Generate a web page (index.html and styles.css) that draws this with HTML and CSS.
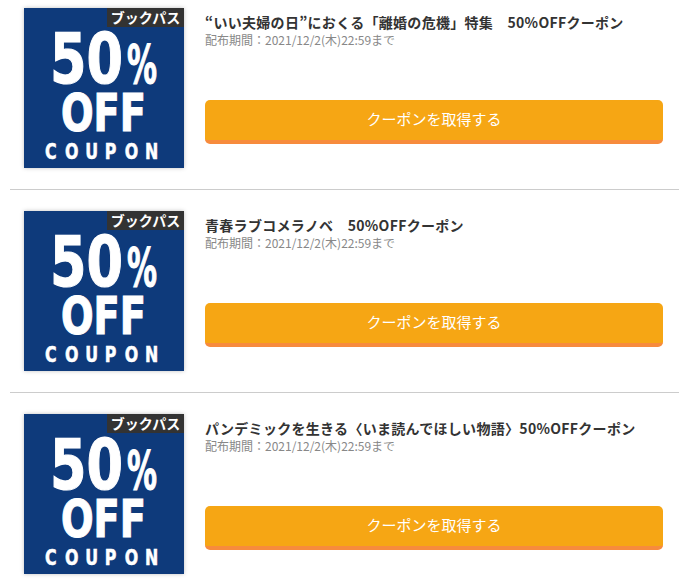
FILE: index.html
```html
<!DOCTYPE html>
<html lang="ja">
<head>
    <meta charset="UTF-8">
    <meta name="viewport" content="width=device-width, initial-scale=1.0">
    <title>クーポン一覧</title>
    <link rel="stylesheet" href="styles.css">
</head>
<body>
    <ul class="coupon-list">
        <li class="coupon">
            <div class="thumb">
                <svg class="thumb-art" width="160" height="160" viewBox="0 0 160 160">
                    <rect width="160" height="160" fill="#0e3a7b"/>
                    <text class="art-big" x="26" y="75" font-size="70" textLength="73" lengthAdjust="spacingAndGlyphs">50</text>
                    <text class="art-big" x="103" y="75" font-size="54" textLength="30" lengthAdjust="spacingAndGlyphs">%</text>
                    <text class="art-big" x="37" y="123" font-size="51" textLength="85" lengthAdjust="spacingAndGlyphs">OFF</text>
                    <text class="art-word" transform="scale(0.72 1)" x="29 57 85 112 140 168" y="151" font-size="22">COUPON</text>
                </svg>
                <span class="badge">ブックパス</span>
            </div>
            <div class="info">
                <p class="title">“いい夫婦の日”におくる「離婚の危機」特集　50%OFFクーポン</p>
                <p class="period">配布期間：2021/12/2(木)22:59まで</p>
                <button class="get-btn" type="button">クーポンを取得する</button>
            </div>
        </li>
        <li class="coupon">
            <div class="thumb">
                <svg class="thumb-art" width="160" height="160" viewBox="0 0 160 160">
                    <rect width="160" height="160" fill="#0e3a7b"/>
                    <text class="art-big" x="26" y="75" font-size="70" textLength="73" lengthAdjust="spacingAndGlyphs">50</text>
                    <text class="art-big" x="103" y="75" font-size="54" textLength="30" lengthAdjust="spacingAndGlyphs">%</text>
                    <text class="art-big" x="37" y="123" font-size="51" textLength="85" lengthAdjust="spacingAndGlyphs">OFF</text>
                    <text class="art-word" transform="scale(0.72 1)" x="29 57 85 112 140 168" y="151" font-size="22">COUPON</text>
                </svg>
                <span class="badge">ブックパス</span>
            </div>
            <div class="info">
                <p class="title">青春ラブコメラノベ　50%OFFクーポン</p>
                <p class="period">配布期間：2021/12/2(木)22:59まで</p>
                <button class="get-btn" type="button">クーポンを取得する</button>
            </div>
        </li>
        <li class="coupon">
            <div class="thumb">
                <svg class="thumb-art" width="160" height="160" viewBox="0 0 160 160">
                    <rect width="160" height="160" fill="#0e3a7b"/>
                    <text class="art-big" x="26" y="75" font-size="70" textLength="73" lengthAdjust="spacingAndGlyphs">50</text>
                    <text class="art-big" x="103" y="75" font-size="54" textLength="30" lengthAdjust="spacingAndGlyphs">%</text>
                    <text class="art-big" x="37" y="123" font-size="51" textLength="85" lengthAdjust="spacingAndGlyphs">OFF</text>
                    <text class="art-word" transform="scale(0.72 1)" x="29 57 85 112 140 168" y="151" font-size="22">COUPON</text>
                </svg>
                <span class="badge">ブックパス</span>
            </div>
            <div class="info">
                <p class="title">パンデミックを生きる〈いま読んでほしい物語〉50%OFFクーポン</p>
                <p class="period">配布期間：2021/12/2(木)22:59まで</p>
                <button class="get-btn" type="button">クーポンを取得する</button>
            </div>
        </li>
    </ul>
</body>
</html>
```

FILE: styles.css
```css
body {
    margin: 0;
    font-family: "Noto Sans CJK JP", "Noto Sans", sans-serif;
    color: #333;
    background: #fff;
}

.coupon-list {
    list-style: none;
    margin: 0;
    padding: 0;
}

.coupon {
    display: flex;
    margin-left: 10px;
    padding: 21px 16px 21px 14px;
    border-bottom: 1px solid #ccc;
}

.coupon:first-child {
    padding-top: 8px;
}

.thumb {
    position: relative;
    flex: 0 0 160px;
    height: 160px;
    box-shadow: 0 0 4px rgba(0, 0, 0, 0.25);
}

.thumb-art {
    display: block;
}

.art-big,
.art-word {
    fill: #fff;
    font-family: "DejaVu Sans", sans-serif;
    font-weight: bold;
}

.art-big {
    stroke: #fff;
    stroke-width: 1.2px;
}

.art-word {
    stroke: #fff;
    stroke-width: 0.6px;
}

.badge {
    position: absolute;
    top: 0;
    right: 0;
    width: 77px;
    height: 19px;
    background: #333;
    color: #fff;
    font-size: 14px;
    font-weight: bold;
    line-height: 19px;
    text-align: center;
}

.info {
    flex: 1;
    margin-left: 21px;
    display: flex;
    flex-direction: column;
}

.title {
    margin: 5px 0 0;
    font-size: 14px;
    font-weight: bold;
    line-height: 18px;
    letter-spacing: 0.3px;
}

.period {
    margin: 0;
    font-size: 12px;
    line-height: 18px;
    color: #888;
}

.get-btn {
    margin-top: 51px;
    height: 44px;
    padding: 0 0 3px;
    border: none;
    border-bottom: 4px solid #f78b3d;
    border-radius: 5px;
    background: #f6a614;
    color: #fff;
    font-family: "Noto Sans CJK JP", sans-serif;
    font-size: 15px;
    cursor: pointer;
}
```
